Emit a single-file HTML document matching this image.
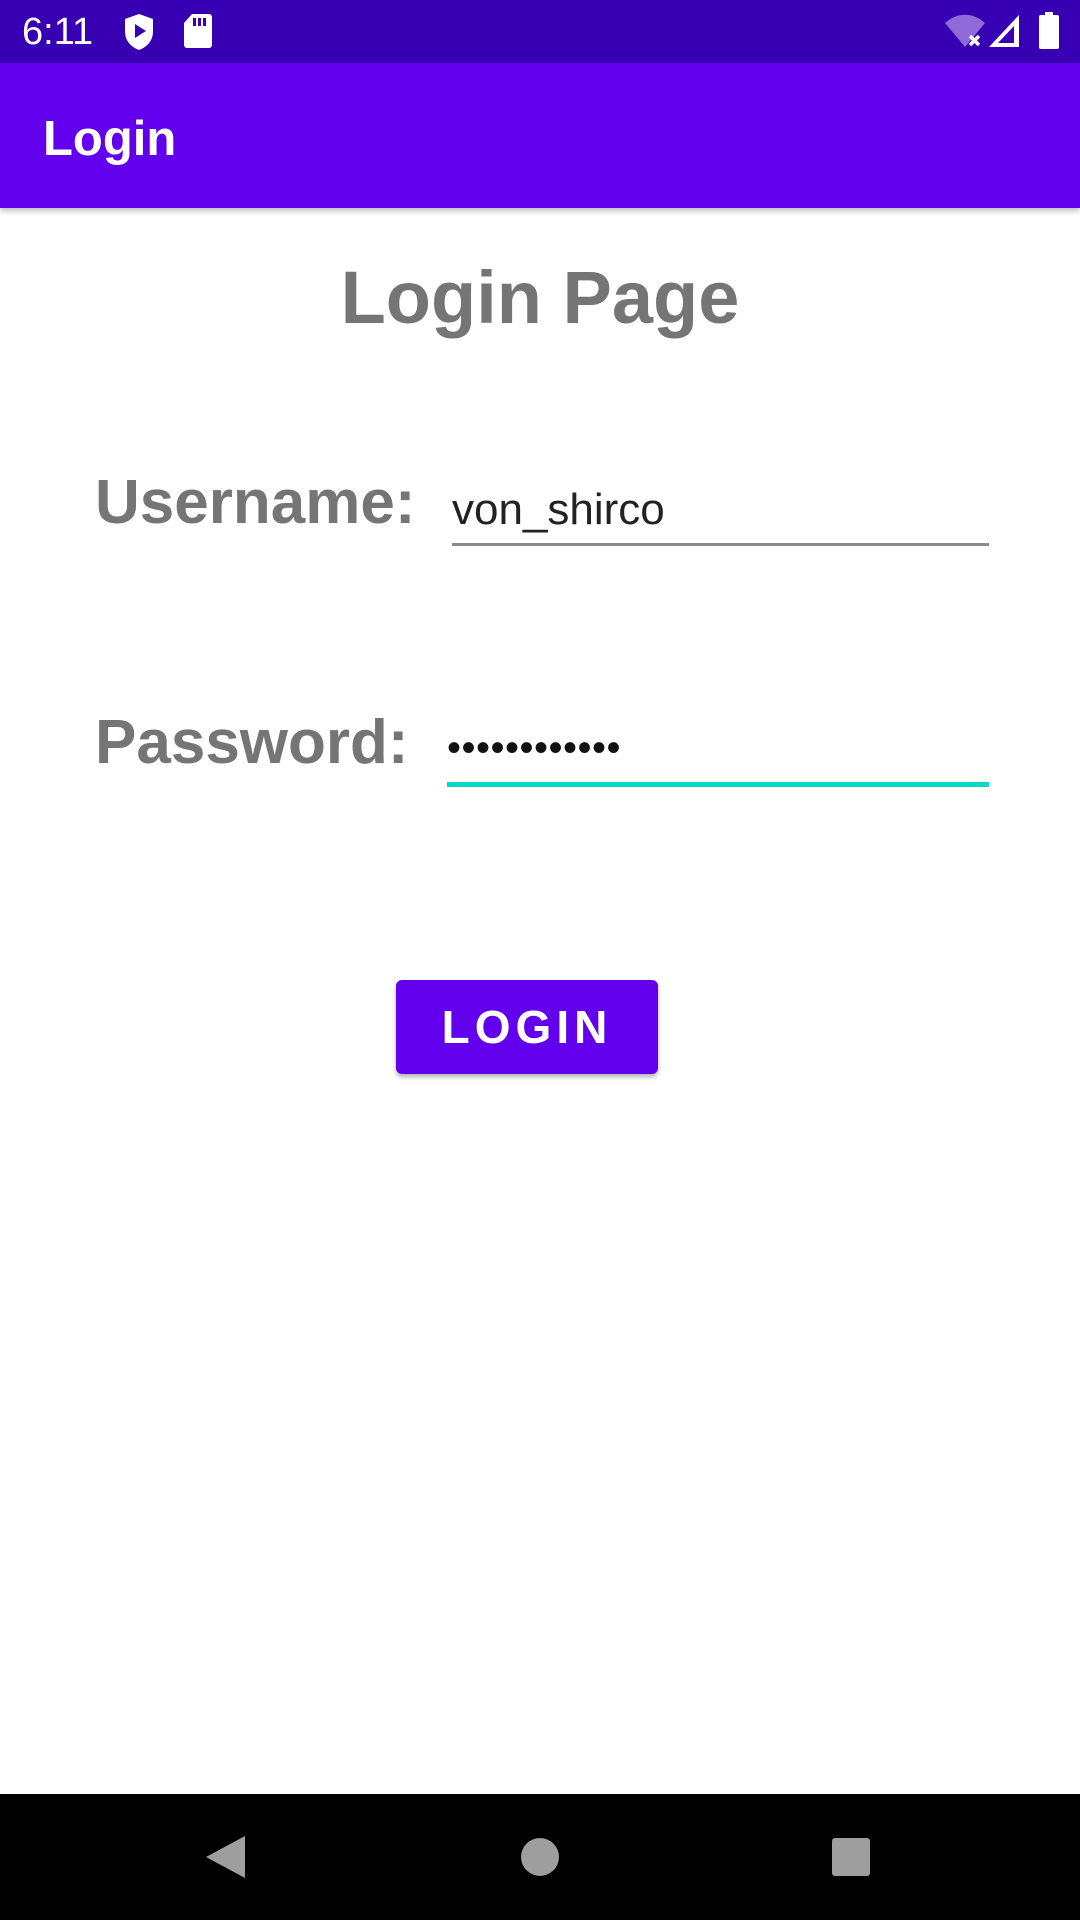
<!DOCTYPE html>
<html><head><meta charset="utf-8"><style>
body{margin:0;width:1080px;height:1920px;position:relative;background:#fff;font-family:"Liberation Sans",Roboto,sans-serif;overflow:hidden}
.abs{position:absolute}
</style></head><body>
<div class="abs" style="left:0;top:0;width:1080px;height:63px;background:#3700B3"></div>
<div class="abs" style="left:22px;top:10px;color:#fff;font-size:38px;line-height:44px">6:11</div>
<svg class="abs" style="left:122px;top:12px" width="34" height="40" viewBox="0 0 34 40"><path d="M17 2 L31 7 V19 C31 29 25 35 17 38 C9 35 3 29 3 19 V7 Z" fill="#fff"/><path d="M13 12 L24 19 L13 26 Z" fill="#3700B3"/></svg>
<svg class="abs" style="left:183px;top:13px" width="30" height="36" viewBox="0 0 30 36"><path d="M9 1 H26 A3 3 0 0 1 29 4 V32 A3 3 0 0 1 26 35 H4 A3 3 0 0 1 1 32 V10 Z" fill="#fff"/><rect x="10" y="5" width="3" height="8" fill="#3700B3"/><rect x="15" y="5" width="3" height="8" fill="#3700B3"/><rect x="20" y="5" width="3" height="8" fill="#3700B3"/></svg>
<svg class="abs" style="left:944px;top:14px" width="42" height="34" viewBox="0 0 42 34"><path d="M1 9 C13 -2 29 -2 41 9 L21 33 Z" fill="#8e6ad8"/><path d="M26 22 l9 9 M35 22 l-9 9" stroke="#fff" stroke-width="3.5"/></svg>
<svg class="abs" style="left:988px;top:14px" width="32" height="34" viewBox="0 0 32 34"><path d="M31 1 V33 H1 Z" fill="#fff"/><path d="M26 12 V29 H10 Z" fill="#3700B3"/></svg>
<svg class="abs" style="left:1038px;top:12px" width="22" height="38" viewBox="0 0 22 38"><rect x="7" y="0" width="8" height="4" fill="#fff"/><rect x="1" y="3" width="20" height="34" rx="2" fill="#fff"/></svg>
<div class="abs" style="left:0;top:63px;width:1080px;height:145px;background:#6200EE;box-shadow:0 3px 5px rgba(0,0,0,.25)"></div>
<div class="abs" style="left:43px;top:109px;color:#fff;font-size:49px;font-weight:bold;line-height:60px">Login</div>
<div class="abs" style="left:0;width:1080px;top:253px;text-align:center;color:#757575;font-size:74px;font-weight:bold;line-height:90px">Login Page</div>
<div class="abs" style="left:95px;top:465px;color:#757575;font-size:62px;font-weight:bold;line-height:76px">Username:</div>
<div class="abs" style="left:452px;top:482px;color:#222;font-size:44px;line-height:56px">von_shirco</div>
<div class="abs" style="left:452px;top:543px;width:537px;height:3px;background:#8a8a8a"></div>
<div class="abs" style="left:95px;top:705px;color:#757575;font-size:62px;font-weight:bold;line-height:76px">Password:</div>
<div class="abs" style="left:447px;top:720px;color:#111;font-size:40px;line-height:56px;letter-spacing:0.5px">••••••••••••</div>
<div class="abs" style="left:447px;top:782px;width:542px;height:5px;background:#03DAC5"></div>
<div class="abs" style="left:396px;top:980px;width:262px;height:94px;background:#6200EE;border-radius:6px;box-shadow:0 3px 5px rgba(0,0,0,.3);color:#fff;font-size:46px;font-weight:bold;letter-spacing:5px;text-align:center;line-height:94px">LOGIN</div>
<div class="abs" style="left:0;top:1794px;width:1080px;height:126px;background:#000"></div>
<svg class="abs" style="left:0;top:1794px" width="1080" height="126"><path d="M245 42 V84 L206 63 Z" fill="#9e9e9e"/><circle cx="540" cy="63" r="19" fill="#9e9e9e"/><rect x="832" y="44" width="38" height="38" rx="3" fill="#9e9e9e"/></svg>
</body></html>
